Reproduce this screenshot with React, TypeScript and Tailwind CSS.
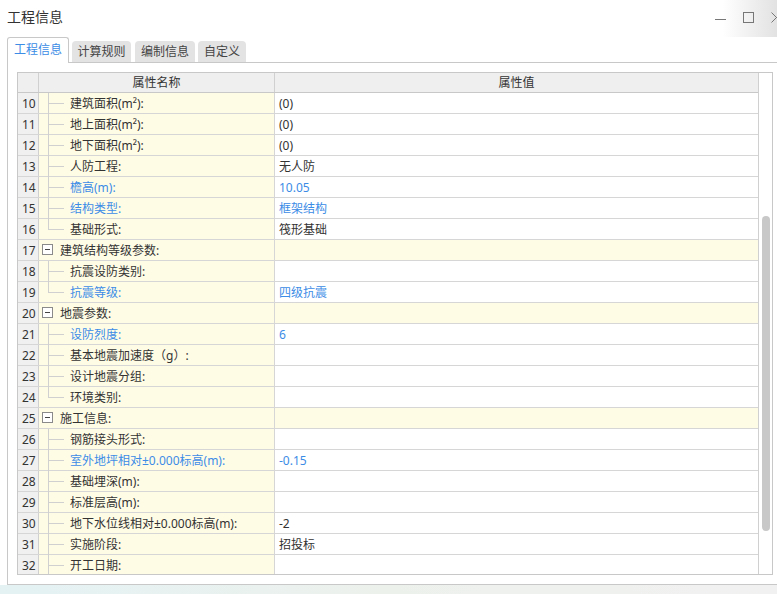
import React from "react";

type Tree = "mid" | "end" | "group";

type Row = {
  n: number;
  label: string;
  value?: string;
  blue?: boolean;
  tree: Tree;
};

const rows: Row[] = [
  { n: 10, label: "建筑面积(m²):", value: "(0)", tree: "mid" },
  { n: 11, label: "地上面积(m²):", value: "(0)", tree: "mid" },
  { n: 12, label: "地下面积(m²):", value: "(0)", tree: "mid" },
  { n: 13, label: "人防工程:", value: "无人防", tree: "mid" },
  { n: 14, label: "檐高(m):", value: "10.05", blue: true, tree: "mid" },
  { n: 15, label: "结构类型:", value: "框架结构", blue: true, tree: "mid" },
  { n: 16, label: "基础形式:", value: "筏形基础", tree: "end" },
  { n: 17, label: "建筑结构等级参数:", tree: "group" },
  { n: 18, label: "抗震设防类别:", tree: "mid" },
  { n: 19, label: "抗震等级:", value: "四级抗震", blue: true, tree: "end" },
  { n: 20, label: "地震参数:", tree: "group" },
  { n: 21, label: "设防烈度:", value: "6", blue: true, tree: "mid" },
  { n: 22, label: "基本地震加速度（g）:", tree: "mid" },
  { n: 23, label: "设计地震分组:", tree: "mid" },
  { n: 24, label: "环境类别:", tree: "end" },
  { n: 25, label: "施工信息:", tree: "group" },
  { n: 26, label: "钢筋接头形式:", tree: "mid" },
  { n: 27, label: "室外地坪相对±0.000标高(m):", value: "-0.15", blue: true, tree: "mid" },
  { n: 28, label: "基础埋深(m):", tree: "mid" },
  { n: 29, label: "标准层高(m):", tree: "mid" },
  { n: 30, label: "地下水位线相对±0.000标高(m):", value: "-2", tree: "mid" },
  { n: 31, label: "实施阶段:", value: "招投标", tree: "mid" },
  { n: 32, label: "开工日期:", tree: "mid" },
];

const TreeMark = ({ tree }: { tree: Tree }) => {
  if (tree === "group") {
    return (
      <div className="absolute left-[3px] top-[4px] w-[11px] h-[11px] border border-[#8a8a8a] bg-white flex items-center justify-center">
        <div className="w-[5px] h-px bg-[#444]" />
      </div>
    );
  }
  return (
    <>
      <div
        className={
          tree === "mid"
            ? "absolute left-[9px] top-0 w-px h-[21px] bg-[#d0d0d0]"
            : "absolute left-[9px] top-0 w-px h-[10px] bg-[#d0d0d0]"
        }
      />
      <div className="absolute left-[9px] top-[10px] w-[16px] h-px bg-[#d0d0d0]" />
    </>
  );
};

const GridRow = ({ row }: { row: Row }) => {
  const group = row.tree === "group";
  const color = row.blue ? "text-[#3c8ce6]" : "text-[#333]";
  return (
    <div className="flex h-[21px] border-b border-[#d6d6d6]">
      <div className="w-[21px] shrink-0 bg-[#f0f0f0] border-r border-[#d0d0d0] pl-[4px] leading-[21px] text-[12px] text-[#333]">
        {row.n}
      </div>
      <div className="relative w-[236px] shrink-0 bg-[#fffce6] border-r border-[#d6d6d6]">
        <TreeMark tree={row.tree} />
        <div
          className={`absolute top-0 leading-[21px] text-[12px] whitespace-nowrap ${color} ${
            group ? "left-[21px]" : "left-[31px]"
          }`}
        >
          {row.label}
        </div>
      </div>
      <div
        className={`flex-1 pl-[4px] leading-[21px] text-[12px] whitespace-nowrap ${color} ${
          group ? "bg-[#fffce6]" : "bg-white"
        }`}
      >
        {row.value}
      </div>
    </div>
  );
};

export default function App() {
  return (
    <div className="relative w-[777px] h-[594px] overflow-hidden bg-white font-['Noto_Sans','Noto_Sans_CJK_SC',sans-serif]">
      {/* title bar */}
      <div className="relative h-[37px] bg-linear-to-r from-white from-[93%] to-[#e2e2e2]">
        <div className="absolute left-[7px] top-[7px] text-[14px] leading-[20px] text-[#333]">
          工程信息
        </div>
        <div className="absolute left-[715px] top-[19px] w-[11px] h-px bg-[#777]" />
        <div className="absolute left-[743px] top-[12px] w-[11px] h-[11px] border border-[#777]" />
        <svg className="absolute left-[771px] top-[12px]" width="11" height="11" viewBox="0 0 11 11">
          <path d="M0.5 0.5 L10.5 10.5 M10.5 0.5 L0.5 10.5" stroke="#777" strokeWidth="1" />
        </svg>
      </div>

      {/* tabs */}
      <div className="flex items-end h-[25px] pl-[7px] text-[12px]">
        <div className="relative z-10 -mb-px h-[26px] w-[62px] bg-white border border-b-0 border-[#c8c8c8] rounded-t-[3px] flex items-center justify-center text-[#3c8ce6] pb-[1px]">
          工程信息
        </div>
        <div className="ml-[3px] h-[21px] w-[59px] bg-[#e3e3e3] rounded-t-[4px] flex items-center justify-center text-[#444]">
          计算规则
        </div>
        <div className="ml-[4px] h-[21px] w-[60px] bg-[#e3e3e3] rounded-t-[4px] flex items-center justify-center text-[#444]">
          编制信息
        </div>
        <div className="ml-[3px] h-[21px] w-[48px] bg-[#e3e3e3] rounded-t-[4px] flex items-center justify-center text-[#444]">
          自定义
        </div>
      </div>

      {/* panel */}
      <div className="ml-[7px] w-[780px] h-[523px] border-t border-l border-b border-[#c8c8c8] bg-white pl-[9px] pt-[9px]">
        <div className="flex w-[756px] h-[503px] border border-[#c8c8c8] overflow-hidden">
          <div className="w-[740px] shrink-0">
            <div className="flex h-[20px] border-b border-[#c8c8c8] bg-[#efefef] text-[12px] text-[#333] leading-[20px]">
              <div className="w-[21px] shrink-0 border-r border-[#d0d0d0]" />
              <div className="w-[236px] shrink-0 border-r border-[#d0d0d0] text-center">属性名称</div>
              <div className="flex-1 text-center">属性值</div>
            </div>
            {rows.map((r) => (
              <GridRow key={r.n} row={r} />
            ))}
          </div>
          <div className="relative flex-1 border-l border-[#d0d0d0] bg-white">
            <div className="absolute left-[3px] top-[143px] w-[8px] h-[315px] rounded-full bg-[#c8c8c8]" />
          </div>
        </div>
      </div>

      {/* desktop strip */}
      <div className="h-[9px] bg-linear-to-r from-[#e4f2f4] via-[#edf1ec] to-[#f1f1f1]" />
    </div>
  );
}
